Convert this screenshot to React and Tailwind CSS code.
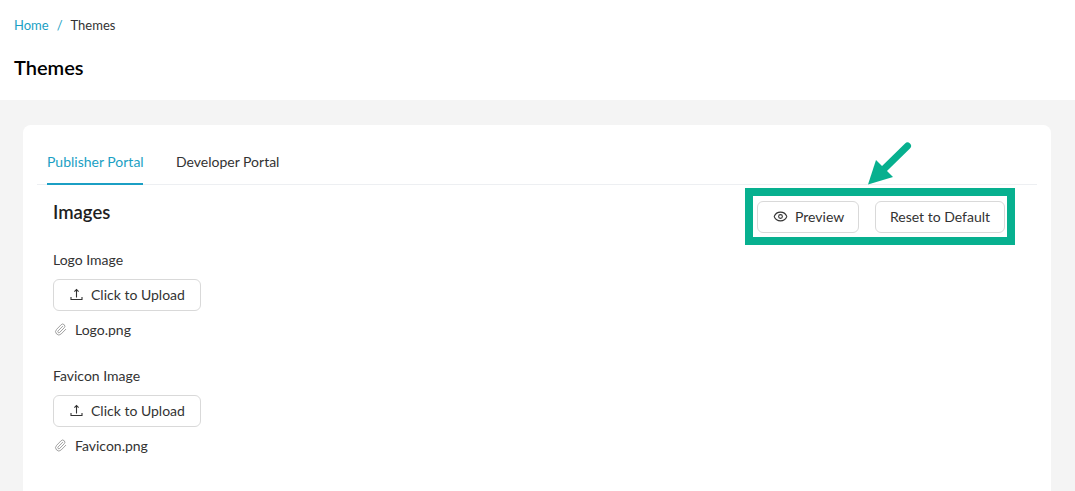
import React from 'react';
import { Eye, Paperclip } from 'lucide-react';

const UploadIcon = () => (
  <svg width="13" height="13" viewBox="0 0 13 13" fill="none" stroke="#333333" strokeWidth="1.1" className="shrink-0 mr-[8px]">
    <path d="M6.5 9.5V1.5" />
    <path d="M4.4 3.6 L6.5 1.5 L8.6 3.6" />
    <path d="M1 9V11.5H12V9" />
  </svg>
);

const UploadField = ({ label, fileName }) => (
  <div className="mb-[25px]">
    <div className="text-[14px] leading-[22px] text-[#333333] mb-2">{label}</div>
    <button className="flex items-center h-8 w-[148px] px-4 pb-[2px] bg-white border border-[#d9d9d9] rounded-md text-[14px] text-[#333333] whitespace-nowrap">
      <UploadIcon />
      <span>Click to Upload</span>
    </button>
    <div className="flex items-center mt-[7px] h-[22px] text-[14px] text-[#333333]">
      <Paperclip size={13} strokeWidth={1.5} className="shrink-0 text-[#8c8c8c] ml-[1px] mr-[8px]" />
      <span>{fileName}</span>
    </div>
  </div>
);

export default function App() {
  return (
    <div className="relative h-[491px] w-[1075px] overflow-hidden bg-[#f4f4f4] font-['Lato',sans-serif]">
      <header className="h-[100px] bg-white px-[14px] pt-[15px]">
        <nav className="flex items-center h-[22px] text-[13px] text-[#333333]">
          <span className="text-[#1b9fc4]">Home</span>
          <span className="mx-2 text-[#1b9fc4]">/</span>
          <span>Themes</span>
        </nav>
        <h1 className="mt-[16px] text-[20px] leading-[28px] font-semibold text-black">Themes</h1>
      </header>

      <main className="px-[24px] pt-[25px]">
        <div className="h-[400px] w-[1028px] -ml-[1px] bg-white rounded-lg px-[14px] pt-[14px]">
          <div className="flex border-b border-[#edeff2] h-[46px] pl-[10px]">
            <div className="h-[46px] w-[96px] flex items-center whitespace-nowrap border-b-2 border-[#1b9fc4] text-[14px] text-[#1b9fc4]">Publisher Portal</div>
            <div className="h-[46px] flex items-center ml-[33px] text-[14px] pb-[1px] text-[#333333]">Developer Portal</div>
          </div>

          <div className="flex justify-between pl-[16px] pr-[32px]">
            <div>
              <h2 className="mt-[13px] mb-[23px] text-[18.5px] leading-[28px] font-semibold text-[#1f1f1f]">Images</h2>
              <UploadField label="Logo Image" fileName="Logo.png" />
              <UploadField label="Favicon Image" fileName="Favicon.png" />
            </div>
            <div className="flex gap-4 mt-4">
              <button className="flex items-center h-8 w-[102px] px-[15px] pb-[2px] bg-white border border-[#d9d9d9] rounded-md text-[14px] text-[#333333] whitespace-nowrap">
                <Eye size={15} strokeWidth={1.7} className="shrink-0 mr-[7px]" />
                <span>Preview</span>
              </button>
              <button className="h-8 w-[130px] pb-[2px] bg-white border border-[#d9d9d9] rounded-md text-[14px] text-[#333333] whitespace-nowrap">
                Reset to Default
              </button>
            </div>
          </div>
        </div>
      </main>

      {/* annotation over the buttons */}
      <div className="absolute left-[745px] top-[188px] w-[270px] h-[57px] border-[8px] border-[#07b08f]" />
      <svg className="absolute left-[860px] top-[135px]" width="60" height="55" viewBox="0 0 60 55">
        <path d="M47.5 11 L24 34" stroke="#07b08f" strokeWidth="7" strokeLinecap="round" fill="none" />
        <path d="M8 49.5 L16 25 L33 42 Z" fill="#07b08f" />
      </svg>
    </div>
  );
}
